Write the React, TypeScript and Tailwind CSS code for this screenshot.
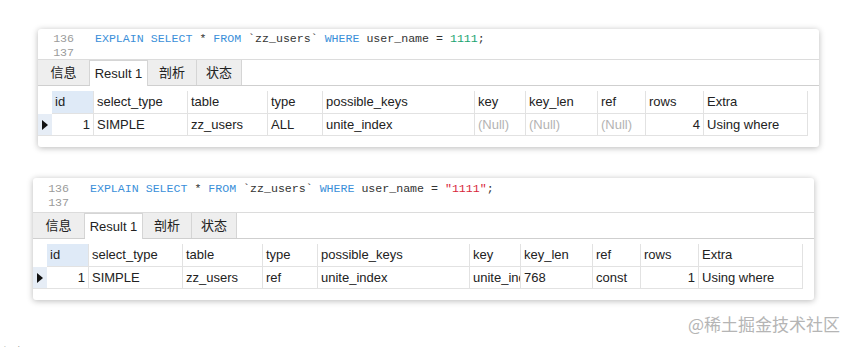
const cols = [14, 42, 94, 80, 55, 152, 51, 72, 48, 58, 104];
const headers = ['id', 'select_type', 'table', 'type', 'possible_keys', 'key', 'key_len', 'ref', 'rows', 'Extra'];

type Cell = { text: string; muted?: boolean; right?: boolean };

interface PanelProps {
  value: 'number' | 'string';
  row: Cell[];
  partialLine?: boolean;
  className: string;
}

const gridStyle = { gridTemplateColumns: cols.map((c) => `${c}px`).join(' ') };

function Panel({ value, row, partialLine, className }: PanelProps) {
  return (
    <div className={`w-[781px] rounded-[3px] bg-white shadow-[0_1px_6px_rgba(0,0,0,0.28)] ${className}`}>
      <div className={`overflow-hidden border-b border-[#dcdcdc] font-['Liberation_Mono',monospace] text-[11.6px] leading-[14px] ${partialLine ? 'h-[35px]' : 'h-[31px] pt-[3px]'}`}>
        {partialLine ? (
          <div className="-mt-[10px] flex">
            <span className="w-[36px] text-right text-[#9a9a9a]">135</span>
          </div>
        ) : null}
        <div className="flex">
          <span className="w-[36px] text-right text-[#9a9a9a]">136</span>
          <span className="ml-[21px] whitespace-pre text-[#333]">
            <span className="text-[#3a8fd9]">EXPLAIN</span> <span className="text-[#3a8fd9]">SELECT</span> *{' '}
            <span className="text-[#3a8fd9]">FROM</span> `zz_users` <span className="text-[#3a8fd9]">WHERE</span> user_name ={' '}
            {value === 'number' ? (
              <span className="text-[#1aa370]">1111</span>
            ) : (
              <span className="text-[#d8253a]">"1111"</span>
            )}
            ;
          </span>
        </div>
        <div className="flex">
          <span className="w-[36px] text-right text-[#9a9a9a]">137</span>
        </div>
      </div>

      <div className="flex h-[26px] items-end border-b border-[#cfcfcf] font-['Liberation_Sans','Noto_Sans_CJK_SC',sans-serif] text-[13px] text-[#222]">
        <div className="flex h-[25px] w-[52px] items-center justify-center border-r border-[#d5d5d5] bg-[#eeeeee]">信息</div>
        <div className="-mb-px flex h-[26px] w-[58px] items-center justify-center border-r border-t border-[#d5d5d5] bg-white">
          Result 1
        </div>
        <div className="flex h-[25px] w-[49px] items-center justify-center border-r border-[#d5d5d5] bg-[#eeeeee]">剖析</div>
        <div className="flex h-[25px] w-[45px] items-center justify-center border-r border-[#d5d5d5] bg-[#eeeeee]">状态</div>
      </div>

      <div className="pb-[11px] pt-[5px] font-['Liberation_Sans','Noto_Sans_CJK_SC',sans-serif] text-[13px] text-[#222]">
        <div className="grid h-[23px]" style={gridStyle}>
          <div />
          {headers.map((h, i) => (
            <div
              key={h}
              className={`flex items-center border-r border-b border-[#e2e2e2] px-[3px] ${i === 0 ? 'bg-[#dfeaf7]' : ''}`}
            >
              {h}
            </div>
          ))}
        </div>
        <div className="grid h-[22px]" style={gridStyle}>
          <div className="flex items-center justify-center border-b border-[#e2e2e2] bg-[#e6edf6]">
            <svg width="6" height="10" viewBox="0 0 6 10">
              <path d="M0 0 L6 5 L0 10 Z" fill="#111" />
            </svg>
          </div>
          {row.map((c, i) => (
            <div
              key={i}
              className={`flex items-center overflow-hidden whitespace-nowrap border-r border-b border-[#e2e2e2] px-[3px] ${
                c.right ? 'justify-end' : ''
              } ${c.muted ? 'text-[#b3b3b3]' : ''}`}
            >
              {c.text}
            </div>
          ))}
        </div>
      </div>
    </div>
  );
}

export default function App() {
  return (
    <div className="relative h-[347px] w-[856px] overflow-hidden bg-white">
      <div className="flex flex-col pt-[29px]">
        <Panel
          className="ml-[38px]"
          value="number"
          row={[
            { text: '1', right: true },
            { text: 'SIMPLE' },
            { text: 'zz_users' },
            { text: 'ALL' },
            { text: 'unite_index' },
            { text: '(Null)', muted: true },
            { text: '(Null)', muted: true },
            { text: '(Null)', muted: true },
            { text: '4', right: true },
            { text: 'Using where' },
          ]}
        />
        <Panel
          className="ml-[33px] mt-[31px]"
          value="string"
          partialLine
          row={[
            { text: '1', right: true },
            { text: 'SIMPLE' },
            { text: 'zz_users' },
            { text: 'ref' },
            { text: 'unite_index' },
            { text: 'unite_index' },
            { text: '768' },
            { text: 'const' },
            { text: '1', right: true },
            { text: 'Using where' },
          ]}
        />
        <div className="mr-[16px] mt-[13px] self-end font-['Noto_Sans_CJK_SC',sans-serif] text-[17px] leading-[22px] text-[#b5b5b5]">
          @稀土掘金技术社区
        </div>
        <div className="ml-[2px] mt-[10px] font-['Noto_Sans_CJK_SC',sans-serif] text-[10px] leading-[12px] text-[#9a9a9a]">
          与 专
        </div>
      </div>
    </div>
  );
}
